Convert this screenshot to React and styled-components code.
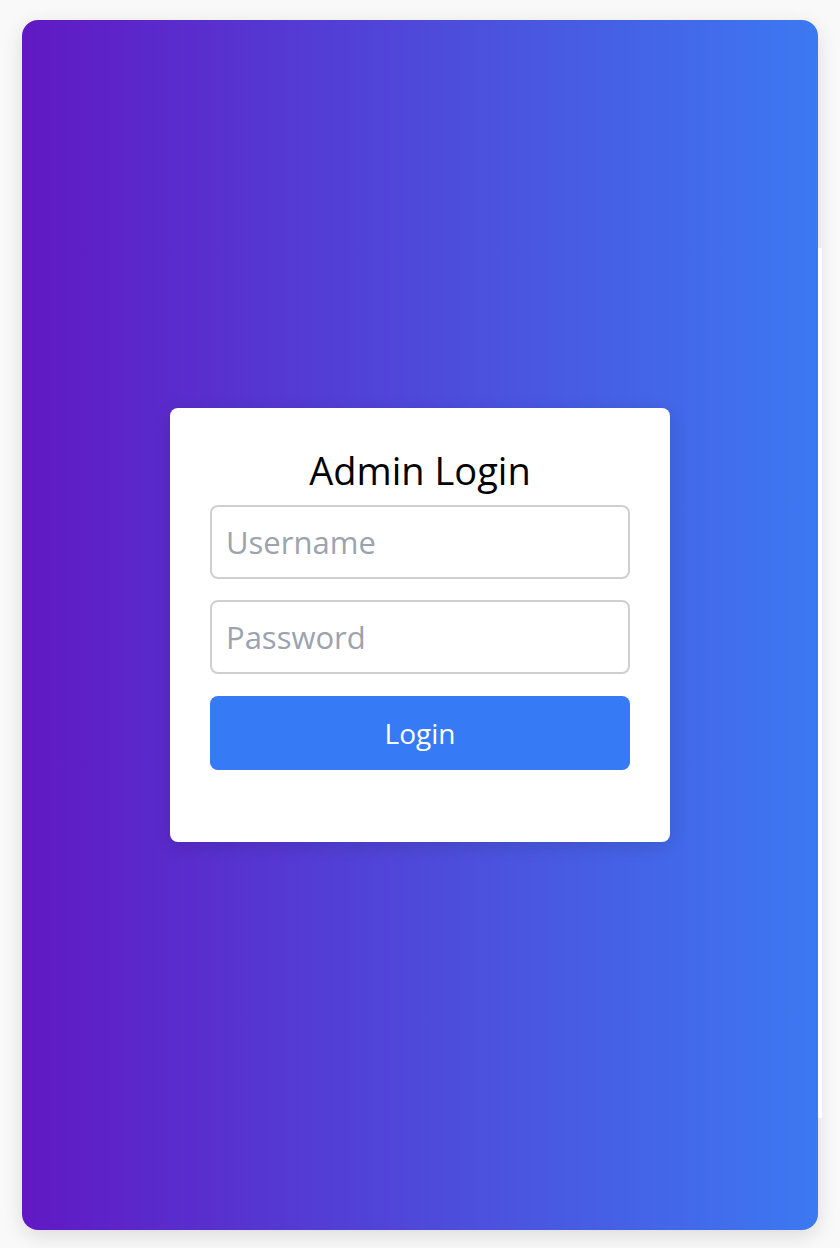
import React from 'react'
import styled, { createGlobalStyle } from 'styled-components'

const GlobalStyle = createGlobalStyle`
  html, body {
    margin: 0;
    padding: 0;
    background: #f9f9f9;
    font-family: 'Open Sans', 'Noto Sans', sans-serif;
  }
  * { box-sizing: border-box; }
`

const Page = styled.div`
  padding: 20px 0 18px 22px;
`

const Frame = styled.div`
  display: flex;
  align-items: flex-start;
  width: 800px;
  height: 1210px;
`

const Panel = styled.div`
  width: 796px;
  height: 100%;
  border-radius: 16px;
  background: linear-gradient(to right, #6119c3, #3c79f1);
  box-shadow: 0 6px 20px rgba(0, 0, 0, 0.12);
  display: flex;
  align-items: center;
  justify-content: center;
`

const Edge = styled.div`
  width: 4px;
  height: 870px;
  margin-top: 228px;
  background: #ffffff;
`

const Card = styled.div`
  width: 500px;
  background: #ffffff;
  border-radius: 8px;
  padding: 36px 40px 72px;
  box-shadow: 0 4px 18px rgba(0, 0, 0, 0.12);
`

const Title = styled.h2`
  margin: 0 0 8px;
  text-align: center;
  font-size: 38px;
  line-height: 53px;
  font-weight: 400;
  color: #000;
`

const Form = styled.form`
  display: flex;
  flex-direction: column;
  gap: 21px;
`

const Input = styled.input`
  height: 74px;
  width: 100%;
  border: 2px solid #cfcfcf;
  border-radius: 8px;
  padding: 0 14px;
  font-family: inherit;
  font-size: 31px;
  color: #111;
  outline: none;
  &::placeholder { color: #9ca3af; }
`

const Button = styled.button`
  height: 74px;
  margin-top: 1px;
  width: 100%;
  border: none;
  border-radius: 8px;
  background: #377af5;
  color: #fff;
  font-family: inherit;
  font-size: 28px;
  cursor: pointer;
`

export default function App() {
  return (
    <>
      <GlobalStyle />
      <Page>
        <Frame>
          <Panel>
            <Card>
              <Title>Admin Login</Title>
              <Form onSubmit={e => e.preventDefault()}>
                <Input type="text" placeholder="Username" />
                <Input type="password" placeholder="Password" />
                <Button type="submit">Login</Button>
              </Form>
            </Card>
          </Panel>
          <Edge />
        </Frame>
      </Page>
    </>
  )
}
